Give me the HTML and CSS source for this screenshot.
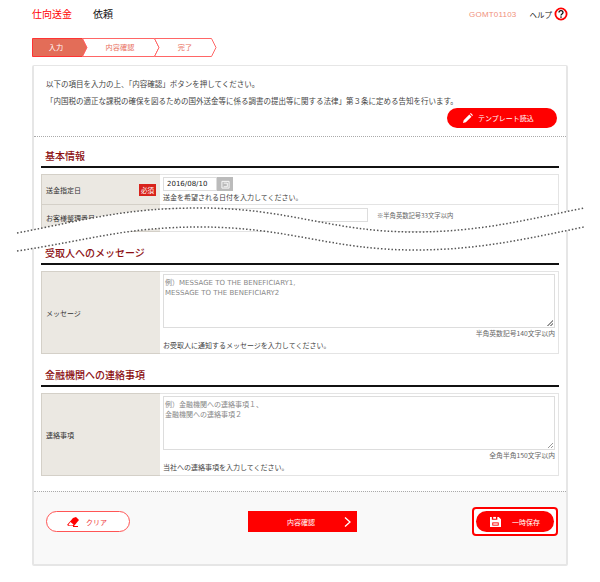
FILE: index.html
```html
<!DOCTYPE html>
<html lang="ja">

<head>
    <meta charset="UTF-8">
    <title>仕向送金 依頼</title>
    <link rel="stylesheet" href="styles.css">
</head>

<body>
    <div class="page">
        <header class="top-bar">
            <h1 class="title"><span class="title-main">仕向送金</span><span class="title-sub">依頼</span></h1>
            <div class="top-right">
                <span class="screen-id">GOMT01103</span>
                <span class="help">ヘルプ</span>
                <svg class="help-icon" viewBox="0 0 14 14">
                    <circle cx="7" cy="7" r="5.6" fill="none" stroke="#f00" stroke-width="1.8" />
                    <path d="M5 5.6c0-2.6 4-2.6 4 0 0 1.5-2 1.5-2 3" fill="none" stroke="#111" stroke-width="1.3" />
                    <rect x="6.3" y="9.4" width="1.4" height="1.4" fill="#111" />
                </svg>
            </div>
        </header>

        <div class="steps">
            <svg class="steps-line" viewBox="0 0 185 20">
                <path d="M.5 .5H50.5L55 9.5L50.5 18.5H.5Z" fill="#e36d58" stroke="#f33" />
                <path d="M50.5 .5H122.5L127 9.5L122.5 18.5H50.5L55 9.5Z" fill="#fff" stroke="#f66" />
                <path d="M122.5 .5H179.5L184 9.5L179.5 18.5H122.5L127 9.5Z" fill="#fff" stroke="#f66" />
            </svg>
            <span class="step step-active">入力</span>
            <span class="step step-two">内容確認</span>
            <span class="step step-three">完了</span>
        </div>

        <main class="card">
            <section class="intro">
                <p>以下の項目を入力の上、「内容確認」ボタンを押してください。</p>
                <p>「内国税の適正な課税の確保を図るための国外送金等に係る調書の提出等に関する法律」第３条に定める告知を行います。</p>
                <div class="intro-actions">
                    <button class="btn-template">
                        <svg class="icon-pen" viewBox="0 0 12 12">
                            <path d="M0 12L.8 8.6 7.6 1.8 10.2 4.4 3.4 11.2ZM8.4 1L9.4 0 12 2.6 11 3.6Z" fill="#fff" />
                        </svg>
                        テンプレート読込
                    </button>
                </div>
            </section>

            <section class="form-area">
                <h2 class="section-title title-first">基本情報</h2>
                <div class="form-table">
                    <div class="row row-date">
                        <div class="label">送金指定日<span class="required">必須</span></div>
                        <div class="value">
                            <div class="date-line">
                                <span class="date-input">2016/08/10</span>
                                <span class="date-btn">
                                    <svg viewBox="0 0 10 10">
                                        <path d="M1 1.5H9V9H1ZM3 3.5H7V7.5H3" fill="none" stroke="#fff" />
                                    </svg>
                                </span>
                            </div>
                            <p class="hint">送金を希望される日付を入力してください。</p>
                        </div>
                    </div>
                    <div class="row row-ref">
                        <div class="label">お客様整理番号</div>
                        <div class="value value-ref">
                            <span class="ref-input"></span>
                            <span class="note">※半角英数記号33文字以内</span>
                        </div>
                    </div>
                </div>

                <h2 class="section-title">受取人へのメッセージ</h2>
                <div class="form-table">
                    <div class="row">
                        <div class="label">メッセージ</div>
                        <div class="value">
                            <div class="textarea">例）MESSAGE TO THE BENEFICIARY1,<br>MESSAGE TO THE BENEFICIARY2</div>
                            <p class="limit">半角英数記号140文字以内</p>
                            <p class="hint hint-bottom">お受取人に通知するメッセージを入力してください。</p>
                        </div>
                    </div>
                </div>

                <h2 class="section-title">金融機関への連絡事項</h2>
                <div class="form-table">
                    <div class="row">
                        <div class="label">連絡事項</div>
                        <div class="value">
                            <div class="textarea">例）金融機関への連絡事項１、<br>金融機関への連絡事項２</div>
                            <p class="limit">全角半角150文字以内</p>
                            <p class="hint hint-bottom">当社への連絡事項を入力してください。</p>
                        </div>
                    </div>
                </div>
            </section>

            <footer class="actions">
                <button class="btn-clear">
                    <svg class="icon-eraser" viewBox="0 0 12 10">
                        <path d="M0 8L6 1 9 0 12 3 7 9H2Z" fill="#f00" />
                        <path d="M1.5 7.5L3.5 5 6.5 7.5 5.5 8.5H2.5Z" fill="#fff" />
                        <path d="M6 9.5H11" stroke="#f00" />
                    </svg>
                    クリア
                </button>
                <button class="btn-confirm">内容確認
                    <svg class="icon-chevron" viewBox="0 0 7 10">
                        <path d="M1 .5L6 5 1 9.5" fill="none" stroke="#fff" stroke-width="1.3" />
                    </svg>
                </button>
                <div class="save-outline">
                    <button class="btn-save">
                        <svg class="icon-save" viewBox="0 0 12 12">
                            <path d="M0 1H2V4H8V1H9.5L12 3.5V12H0Z" fill="#fff" />
                            <rect x="3.5" y="1" width="3" height="2" fill="#fff" />
                            <rect x="2.5" y="7" width="7" height="3.5" fill="#f00" />
                            <rect x="3.5" y="8" width="5" height="1.5" fill="#fff" />
                        </svg>
                        一時保存
                    </button>
                </div>
            </footer>
        </main>

        <!-- page break marker drawn over the form -->
        <svg class="tear" viewBox="0 0 600 582">
            <path d="M17 233C90 219 125 208 200 208C290 208 330 232 415 232C480 232 530 219 584 208V227C530 238 480 250 415 250C330 250 290 227 200 227C125 227 90 240 17 251Z" fill="#fff" />
            <path d="M17 233C90 219 125 208 200 208C290 208 330 232 415 232C480 232 530 219 584 208" fill="none" stroke="#555" stroke-width="1.5" stroke-dasharray="1.5 2" />
            <path d="M17 251C90 240 125 227 200 227C290 227 330 250 415 250C480 250 530 238 584 227" fill="none" stroke="#555" stroke-width="1.5" stroke-dasharray="1.5 2" />
        </svg>
    </div>
</body>

</html>
```

FILE: styles.css
```css
* {
    box-sizing: border-box;
    margin: 0;
    padding: 0;
}

body {
    font-family: "Noto Sans CJK JP", "Liberation Sans", sans-serif;
    background: #fff;
    color: #333;
    font-size: 8px;
}

button {
    font-family: inherit;
    border: none;
}

.page {
    position: relative;
    width: 600px;
    height: 582px;
    overflow: hidden;
    padding: 0 32px;
}

/* Header */

.top-bar {
    display: flex;
    justify-content: space-between;
    align-items: center;
    height: 28px;
    margin-bottom: 10px;
}

.title {
    font-size: 10px;
    font-weight: 400;
    margin-top: -2px;
}

.title-main {
    color: #f00;
    margin-right: 21px;
}

.title-sub {
    color: #111;
}

.top-right {
    display: flex;
    align-items: center;
}

.screen-id {
    color: #f0907c;
    font-family: "Liberation Sans", sans-serif;
    font-size: 8px;
    letter-spacing: .2px;
    margin-right: 13px;
}

.help {
    color: #222;
    font-size: 7.5px;
}

.help-icon {
    width: 14px;
    height: 14px;
    margin-left: 2px;
}

/* Steps */

.steps {
    position: relative;
    display: flex;
    height: 20px;
    margin-bottom: 7px;
}

.steps-line {
    position: absolute;
    left: 0;
    top: 0;
    width: 185px;
    height: 20px;
}

.step {
    position: relative;
    font-size: 7.2px;
    line-height: 19px;
    text-align: center;
    color: #e9705e;
}

.step-active {
    width: 48px;
    color: #fff;
}

.step-two {
    width: 80px;
}

.step-three {
    width: 50px;
}

/* Card */

.card {
    width: 536px;
    height: 501px;
    background: #fff;
    border: 1px solid #e6e6e6;
    border-width: 1px 2px 2px 2px;
    border-radius: 2px;
}

.intro {
    height: 71px;
    padding: 12px 9px 0 12px;
    border-bottom: 1px dotted #aaa;
    font-size: 7.5px;
    color: #444;
}

.intro p {
    line-height: 11px;
    margin-bottom: 6px;
    white-space: nowrap;
}

.intro-actions {
    display: flex;
    justify-content: flex-end;
    margin-top: -4px;
}

.btn-template {
    display: flex;
    align-items: center;
    gap: 5px;
    width: 110px;
    height: 20px;
    padding-left: 16px;
    border-radius: 10px;
    background: #f00;
    color: #fff;
    font-size: 7px;
}

.icon-pen {
    width: 10px;
    height: 10px;
}

.form-area {
    height: 354px;
    padding: 0 7px;
}

.section-title {
    height: 33px;
    padding: 13px 0 0 4px;
    border-bottom: 2px solid #111;
    font-size: 10px;
    line-height: 15px;
    font-weight: 500;
    color: #8c0f12;
}

.title-first {
    height: 31px;
    padding-top: 11px;
}

.form-table {
    margin-top: 6px;
    border: 1px solid #e4e4e4;
    border-left: none;
}

.row {
    display: flex;
}

.row-date {
    height: 30px;
    border-bottom: 1px solid #e4e4e4;
}

.row-ref {
    height: 26px;
}

.label {
    display: flex;
    align-items: center;
    justify-content: space-between;
    flex: none;
    width: 119px;
    margin: -1px 0;
    padding: 0 4px 0 4px;
    background: #ebe8e2;
    border: 1px solid #d4d0c8;
    border-right: none;
    color: #333;
    font-size: 7px;
}

.required {
    background: #d8231c;
    color: #fff;
    font-size: 6.5px;
    line-height: 12px;
    padding: 0 2px;
}

.value {
    flex: 1;
    padding: 2px 3px;
    min-width: 0;
}

.date-line {
    display: flex;
    height: 14px;
}

.date-input {
    width: 54px;
    border: 1px solid #ddd;
    font-family: "DejaVu Sans", sans-serif;
    font-size: 7px;
    line-height: 12px;
    padding-left: 3px;
    color: #222;
}

.date-btn {
    display: flex;
    align-items: center;
    justify-content: center;
    width: 16px;
    background: #bbb;
}

.date-btn svg {
    width: 9px;
    height: 9px;
}

.hint {
    color: #444;
    font-size: 7px;
    line-height: 11px;
    margin-top: 1px;
}

.hint-bottom {
    margin-top: 2px;
}

.value-ref {
    display: flex;
    align-items: center;
    gap: 9px;
    padding-top: 0;
    padding-bottom: 6px;
}

.ref-input {
    width: 205px;
    height: 14px;
    border: 1px solid #ddd;
}

.note {
    color: #666;
    font-size: 6.3px;
}

.limit {
    color: #666;
    font-size: 6.8px;
    text-align: right;
    line-height: 10px;
}

.textarea {
    position: relative;
    height: 54px;
    border: 1px solid #ddd;
    font-family: "DejaVu Sans", "Noto Sans CJK JP", sans-serif;
    font-size: 7px;
    line-height: 10px;
    color: #888;
    padding: 3px 1px;
}

.textarea::after {
    content: "";
    position: absolute;
    right: 1px;
    bottom: 1px;
    width: 6px;
    height: 6px;
    background: linear-gradient(135deg, transparent 50%, #999 50%, #999 60%, transparent 60%, transparent 75%, #999 75%, #999 85%, transparent 85%);
}

/* Footer buttons */

.actions {
    display: flex;
    align-items: flex-start;
    height: 73px;
    padding: 19px 0 0 12px;
    border-top: 1px dotted #aaa;
    background: #f9f9f9;
}

.btn-clear {
    display: flex;
    align-items: center;
    gap: 7px;
    width: 84px;
    height: 21px;
    padding-left: 20px;
    background: #fff;
    border: 1px solid #f55;
    border-radius: 11px;
    color: #e33;
    font-size: 7px;
}

.icon-eraser {
    width: 12px;
    height: 10px;
}

.btn-confirm {
    display: flex;
    align-items: center;
    justify-content: space-between;
    width: 109px;
    height: 21px;
    margin-left: 118px;
    padding: 0 6px 0 39px;
    background: #f00;
    color: #fff;
    font-size: 7px;
}

.icon-chevron {
    width: 7px;
    height: 10px;
}

.save-outline {
    margin-left: 115px;
    margin-top: -4px;
    padding: 2px;
    background: #fff;
    border: 2px solid #f00;
    border-radius: 4px;
}

.btn-save {
    display: flex;
    align-items: center;
    gap: 11px;
    width: 78px;
    height: 21px;
    padding-left: 14px;
    background: #f00;
    border-radius: 11px;
    color: #fff;
    font-size: 7px;
}

.icon-save {
    width: 11px;
    height: 11px;
}

/* Wavy cut over the form */

.tear {
    position: absolute;
    left: 0;
    top: 0;
    width: 600px;
    height: 582px;
    pointer-events: none;
}
```
